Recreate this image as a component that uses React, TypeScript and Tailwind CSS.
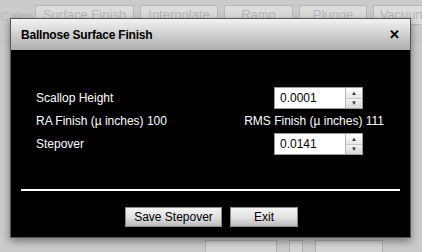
import React from "react";

const tabs = [
  { label: "Surface Finish", w: "w-[99px]" },
  { label: "Interpolate", w: "w-[78px]" },
  { label: "Ramp", w: "w-[69px]" },
  { label: "Plunge", w: "w-[68px]" },
  { label: "Vacuum", w: "w-[60px]" },
];

function Spinner({ value }: { value: string }) {
  return (
    <div className="flex h-[22px] w-[89px] border border-[#9a9a9a] bg-white">
      <div className="flex flex-1 items-center px-[5px] text-[12px] text-black">{value}</div>
      <div className="flex w-[17px] flex-col border-l border-[#b5b5b5]">
        <div className="flex flex-1 items-center justify-center bg-gradient-to-b from-white to-[#e6e6e6] text-[6px] leading-none text-[#333]">
          ▲
        </div>
        <div className="flex flex-1 items-center justify-center border-t border-[#c8c8c8] bg-gradient-to-b from-[#f2f2f2] to-[#d8d8d8] text-[6px] leading-none text-[#333]">
          ▼
        </div>
      </div>
    </div>
  );
}

function Btn({ children, w }: { children: React.ReactNode; w: string }) {
  return (
    <button
      className={`${w} flex h-[20px] items-center justify-center border border-[#8c8c8c] bg-gradient-to-b from-[#f4f4f4] via-[#e2e2e2] to-[#bdbdbd] text-[12px] text-black`}
    >
      {children}
    </button>
  );
}

export default function App() {
  return (
    <div
      className="relative h-[252px] w-[422px] overflow-hidden bg-[#cbcbcb]"
      style={{ fontFamily: '"Liberation Sans", Arial, sans-serif' }}
    >
      {/* faded page behind the modal */}
      <div className="flex items-start gap-[6px] pt-[5px]">
        <div className="w-[29px] pt-[2px] text-[13px] text-[#b3bac2]">Calcs</div>
        {tabs.map((t) => (
          <div
            key={t.label}
            className={`${t.w} flex h-[20px] shrink-0 items-center justify-center border border-[#b9b9b9] bg-[#dcdcdc] text-[13px] text-[#b3bac2]`}
          >
            {t.label}
          </div>
        ))}
      </div>
      <div className="mt-[14px] h-[1px] w-full bg-[#b8c4d0]" />
      <div className="absolute left-0 top-[240px] flex w-full gap-[12px] pl-[205px]">
        <div className="h-[14px] w-[72px] border border-[#b3b3b3] bg-[#d6d6d6]" />
        <div className="h-[14px] w-[14px] border border-[#b3b3b3] bg-[#d6d6d6]" />
        <div className="h-[14px] w-[68px] border border-[#b3b3b3] bg-[#d6d6d6]" />
      </div>

      {/* modal */}
      <div className="absolute left-[10px] top-[18px] flex h-[220px] w-[401px] flex-col border border-[#555] bg-black shadow-[0_3px_8px_rgba(0,0,0,0.45)]">
        <div className="flex h-[31px] items-center justify-between bg-gradient-to-b from-[#f3f3f3] to-[#aeaeae] pl-[10px] pr-[10px]">
          <span className="text-[12px] font-bold tracking-[-0.2px] text-black">Ballnose Surface Finish</span>
          <span className="text-[13px] font-bold leading-none text-black">✕</span>
        </div>
        <div className="flex flex-1 flex-col px-[10px]">
          <div className="mt-[37px] flex flex-col gap-[1px] pl-[15px] pr-[37px] text-[12px] text-white">
            <div className="flex h-[22px] items-center justify-between">
              <span>Scallop Height</span>
              <Spinner value="0.0001" />
            </div>
            <div className="mr-[-21px] flex h-[22px] items-center justify-between">
              <span>RA Finish (µ inches) 100</span>
              <span>RMS Finish (µ inches) 111</span>
            </div>
            <div className="flex h-[22px] items-center justify-between">
              <span>Stepover</span>
              <Spinner value="0.0141" />
            </div>
          </div>
          <div className="mt-[34px] h-[2px] w-full bg-white" />
          <div className="mt-[16px] flex justify-center gap-[8px] pl-[2px]">
            <Btn w="w-[97px]">Save Stepover</Btn>
            <Btn w="w-[68px]">Exit</Btn>
          </div>
        </div>
      </div>
    </div>
  );
}
